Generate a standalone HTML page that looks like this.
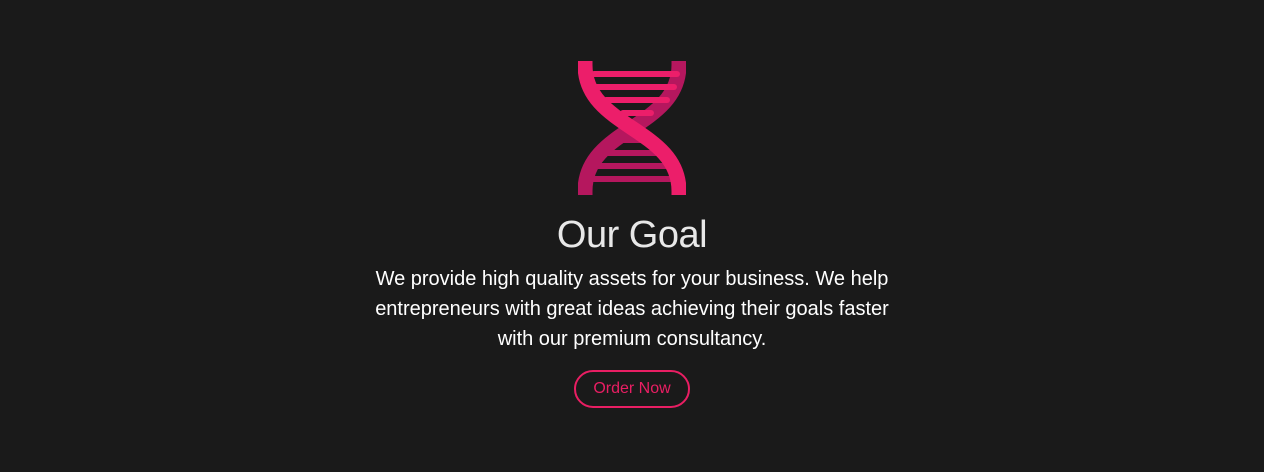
<!DOCTYPE html>
<html><head><meta charset="utf-8"><style>
html,body{margin:0;padding:0;background:#1a1a1a;width:1264px;height:472px;overflow:hidden}
body{position:relative;font-family:"Liberation Sans",sans-serif;color:#fff}
svg{position:absolute;left:578px;top:61px}
h1{position:absolute;left:0;width:1264px;top:210px;margin:0;text-align:center;font-weight:normal;font-size:38px;letter-spacing:-0.5px;line-height:50px;color:#e8e8e8}
p{position:absolute;left:0;width:1264px;top:264px;margin:0;text-align:center;font-size:20px;line-height:30px;color:#fff}
.btn{position:absolute;left:574px;top:370px;width:112px;height:34px;border:2px solid #e91e63;border-radius:19px;color:#e91e63;font-size:16px;line-height:34px;text-align:center}
</style></head><body>
<svg width="108" height="134" viewBox="0 0 108 134">
<path d="M101,0 V4 C101,67 7,67 7,130 V134" stroke="#b5175e" stroke-width="15" fill="none"/>
<g stroke="#ec1e6a" stroke-width="6" stroke-linecap="round">
<line x1="16" y1="13" x2="99" y2="13"/>
<line x1="18" y1="26" x2="96" y2="26"/>
<line x1="28" y1="39" x2="89" y2="39"/>
<line x1="45" y1="52" x2="73" y2="52"/>
</g>
<g stroke="#b5175e" stroke-width="6">
<line x1="30" y1="79" x2="70" y2="79"/>
<line x1="16" y1="92" x2="86" y2="92"/>
<line x1="14" y1="105" x2="94" y2="105"/>
<line x1="14" y1="118" x2="94" y2="118"/>
</g>
<path d="M7,0 V4 C7,67 101,67 101,130 V134" stroke="#ec1e6a" stroke-width="15" fill="none"/>
</svg>
<h1>Our Goal</h1>
<p>We provide high quality assets for your business. We help<br>entrepreneurs with great ideas achieving their goals faster<br>with our premium consultancy.</p>
<div class="btn">Order Now</div>
</body></html>
